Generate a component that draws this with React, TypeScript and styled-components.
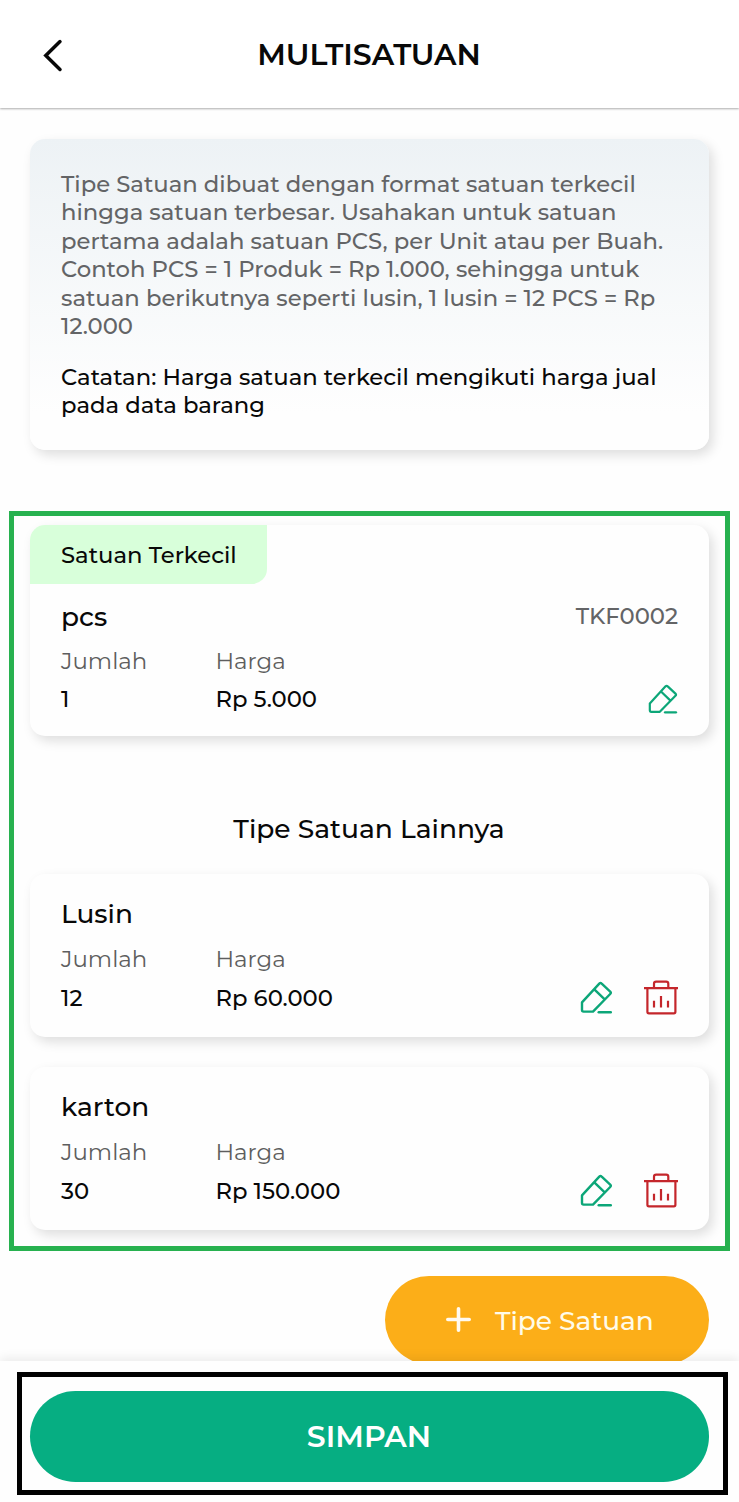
import React from "react";
import styled, { createGlobalStyle } from "styled-components";

const GlobalStyle = createGlobalStyle`
  * { box-sizing: border-box; }
  body { margin: 0; background: #fefefe; font-family: Montserrat, Inter, "Liberation Sans", sans-serif; color: #0b0b0b; }
`;

const Screen = styled.div`
  width: 739px;
  height: 1502px;
  display: flex;
  flex-direction: column;
  overflow: hidden;
  background: #fefefe;
`;

const Header = styled.header`
  height: 108px;
  flex: none;
  display: grid;
  grid-template-columns: 106px 1fr 107px;
  align-items: center;
  background: #fff;
  box-shadow: 0 1px 2px rgba(0, 0, 0, 0.32);
`;

const BackButton = styled.button`
  display: flex;
  width: 24px;
  height: 36px;
  margin: 1px 0 0 41px;
  padding: 0;
  border: 0;
  background: none;
`;

const Text = styled.span<{ $size?: number; $color?: string; $weight?: number }>`
  display: block;
  white-space: nowrap;
  font-size: ${(p) => p.$size ?? 22.72}px;
  color: ${(p) => p.$color ?? "#080808"};
  font-weight: ${(p) => p.$weight ?? 500};
`;

const Label = styled(Text)`
  font-size: 22.9px;
  font-weight: 400;
  color: #5e5e5e;
`;

const Value = styled(Text)`
  grid-row: 3;
`;

const Code = styled(Text)`
  margin-top: -2px;
`;

const Title = styled.h1`
  margin: 1px 0 0;
  text-align: center;
`;

const Content = styled.main`
  flex: 1;
  min-height: 0;
  overflow: hidden;
  display: flex;
  flex-direction: column;
  padding: 31px 9px 0;
`;

const Card = styled.section`
  flex: none;
  border-radius: 15px;
  background: #fefefe;
  box-shadow: 4px 5px 12px rgba(0, 0, 0, 0.13);
`;

const InfoCard = styled(Card)`
  height: 311px;
  margin: 0 21px;
  padding: 31px;
  background: linear-gradient(#edf2f5, #fefefe 88%);
  line-height: 28.4px;
`;

const Paragraph = styled.p`
  margin: 0 0 22.6px;
`;

const UnitFrame = styled.div`
  flex: none;
  height: 740px;
  margin-top: 61px;
  padding: 9px 16px 0;
  border: 5px solid #27b14f;
`;

const UnitCard = styled(Card)<{ $height: number; $gap?: number }>`
  height: ${(p) => p.$height}px;
  margin-bottom: ${(p) => p.$gap ?? 0}px;
`;

const Tag = styled.div`
  display: flex;
  align-items: center;
  width: 237px;
  height: 59px;
  padding: 1px 0 0 31px;
  border-radius: 15px 0 15px 0;
  background: #d8ffda;
`;

const UnitBody = styled.div<{ $removable?: boolean }>`
  display: grid;
  grid-template-columns: 154.5px 1fr auto;
  grid-template-rows: ${(p) => (p.$removable ? "34px 56px 22px" : "34px 55px 20px")};
  align-items: center;
  padding: ${(p) => (p.$removable ? 22.5 : 15.5)}px 31px 0;
`;

const UnitHeading = styled.div`
  grid-column: 1 / -1;
  display: flex;
  justify-content: space-between;
  align-items: center;
`;

const Actions = styled.div`
  grid-column: 3;
  grid-row: 3;
  display: flex;
  align-items: center;
  height: 0;
  gap: 31px;
`;

const SectionTitle = styled.h2`
  display: flex;
  justify-content: center;
  align-items: center;
  height: 138px;
  margin: 0;
  padding: 46px 1px 0 0;
`;

const AddButton = styled.button`
  flex: none;
  align-self: flex-end;
  display: flex;
  align-items: center;
  width: 324px;
  height: 88px;
  margin: 25px 21px 0 0;
  padding: 0 0 0 61px;
  gap: 24px;
  border: 0;
  border-radius: 44px;
  background: #fcae18;
  font-family: inherit;

  svg {
    margin-bottom: 1px;
  }

  span {
    margin-top: 1px;
  }
`;

const Footer = styled.footer`
  position: relative;
  flex: none;
  height: 141px;
  padding: 11px 11px 0 17px;
  background: #fefefe;
  box-shadow: 0 -3px 10px rgba(0, 0, 0, 0.08);
`;

const SaveFrame = styled.div`
  height: 123px;
  border: 5px solid #000;
  padding: 14.4px 14px 0 8px;
`;

const SaveButton = styled.button`
  display: flex;
  justify-content: center;
  align-items: center;
  width: 100%;
  height: 91px;
  padding: 0 1px 1px 0;
  border: 0;
  border-radius: 46px;
  background: #06ae82;
  font-family: inherit;
`;

const gray = "#636466";

function EditIcon({ size = 33 }: { size?: number }) {
  return (
    <svg width={size} height={size} viewBox="0 0 33 33" fill="none" stroke="#0ca678" strokeWidth="2.4" strokeLinecap="round" strokeLinejoin="round">
      <path d="M2 21.4 19.3 2.6Q20.5 1.4 21.7 2.6L30.2 10.6Q31.4 11.8 30.2 13L13 30.6H3.6Q2 30.6 2 29ZM14.3 8.3 24.7 18.3" />
      <path d="M18.8 31.2H30.7" strokeWidth="2.6" />
    </svg>
  );
}

function TrashIcon() {
  return (
    <svg width="34" height="35" viewBox="0 0 34 35" fill="none" stroke="#c4262b" strokeWidth="2.2">
      <path d="M0 8.2H34M10 8V3.8Q10 1.6 12.2 1.6H22.1Q24.3 1.6 24.3 3.8V8M3.4 8V31.8Q3.4 33.3 4.9 33.3H29.9Q31.4 33.3 31.4 31.8V8" />
      <path d="M10 20.7V27.5M17 16V27.5M24 20.7V27.5" />
    </svg>
  );
}

const infoLines = [
  "Tipe Satuan dibuat dengan format satuan terkecil",
  "hingga satuan terbesar. Usahakan untuk satuan",
  "pertama adalah satuan PCS, per Unit atau per Buah.",
  "Contoh PCS = 1 Produk = Rp 1.000, sehingga untuk",
  "satuan berikutnya seperti lusin, 1 lusin = 12 PCS = Rp",
  "12.000",
];

const noteLines = [
  "Catatan: Harga satuan terkecil mengikuti harga jual",
  "pada data barang",
];

interface UnitProps {
  name: string;
  amount: string;
  price: string;
  code?: string;
  removable?: boolean;
}

function Unit({ name, amount, price, code, removable }: UnitProps) {
  return (
    <UnitBody $removable={removable}>
      <UnitHeading>
        <Text $size={26.4}>{name}</Text>
        {code && <Code $color={gray}>{code}</Code>}
      </UnitHeading>
      <Label>Jumlah</Label>
      <Label>Harga</Label>
      <Value>{amount}</Value>
      <Value>{price}</Value>
      <Actions>
        <EditIcon size={removable ? 33 : 30} />
        {removable && <TrashIcon />}
      </Actions>
    </UnitBody>
  );
}

export default function App() {
  return (
    <Screen>
      <GlobalStyle />
      <Header>
        <BackButton aria-label="Kembali">
          <svg width="24" height="36" viewBox="0 0 24 36" fill="none" stroke="#080808" strokeWidth="3.5" strokeLinecap="round">
            <path d="M19 4.6 4.8 18.5 19 32.5" />
          </svg>
        </BackButton>
        <Title><Text $size={30} $weight={600}>MULTISATUAN</Text></Title>
      </Header>
      <Content>
        <InfoCard>
          <Paragraph>
            {infoLines.map((t) => <Text key={t} $color={gray}>{t}</Text>)}
          </Paragraph>
          <Paragraph>
            {noteLines.map((t) => <Text key={t}>{t}</Text>)}
          </Paragraph>
        </InfoCard>
        <UnitFrame>
          <UnitCard $height={211}>
            <Tag><Text>Satuan Terkecil</Text></Tag>
            <Unit name="pcs" code="TKF0002" amount="1" price="Rp 5.000" />
          </UnitCard>
          <SectionTitle><Text $size={26.5}>Tipe Satuan Lainnya</Text></SectionTitle>
          <UnitCard $height={163} $gap={30}>
            <Unit removable name="Lusin" amount="12" price="Rp 60.000" />
          </UnitCard>
          <UnitCard $height={163}>
            <Unit removable name="karton" amount="30" price="Rp 150.000" />
          </UnitCard>
        </UnitFrame>
        <AddButton>
          <svg width="25" height="25" viewBox="0 0 25 25" stroke="#fffaf0" strokeWidth="3.6" strokeLinecap="round">
            <path d="M12.5 1.8V23.2M1.8 12.5H23.2" />
          </svg>
          <Text $size={26.4} $color="#fffbe8">Tipe Satuan</Text>
        </AddButton>
      </Content>
      <Footer>
        <SaveFrame>
          <SaveButton><Text $size={30} $weight={600} $color="#fff">SIMPAN</Text></SaveButton>
        </SaveFrame>
      </Footer>
    </Screen>
  );
}
